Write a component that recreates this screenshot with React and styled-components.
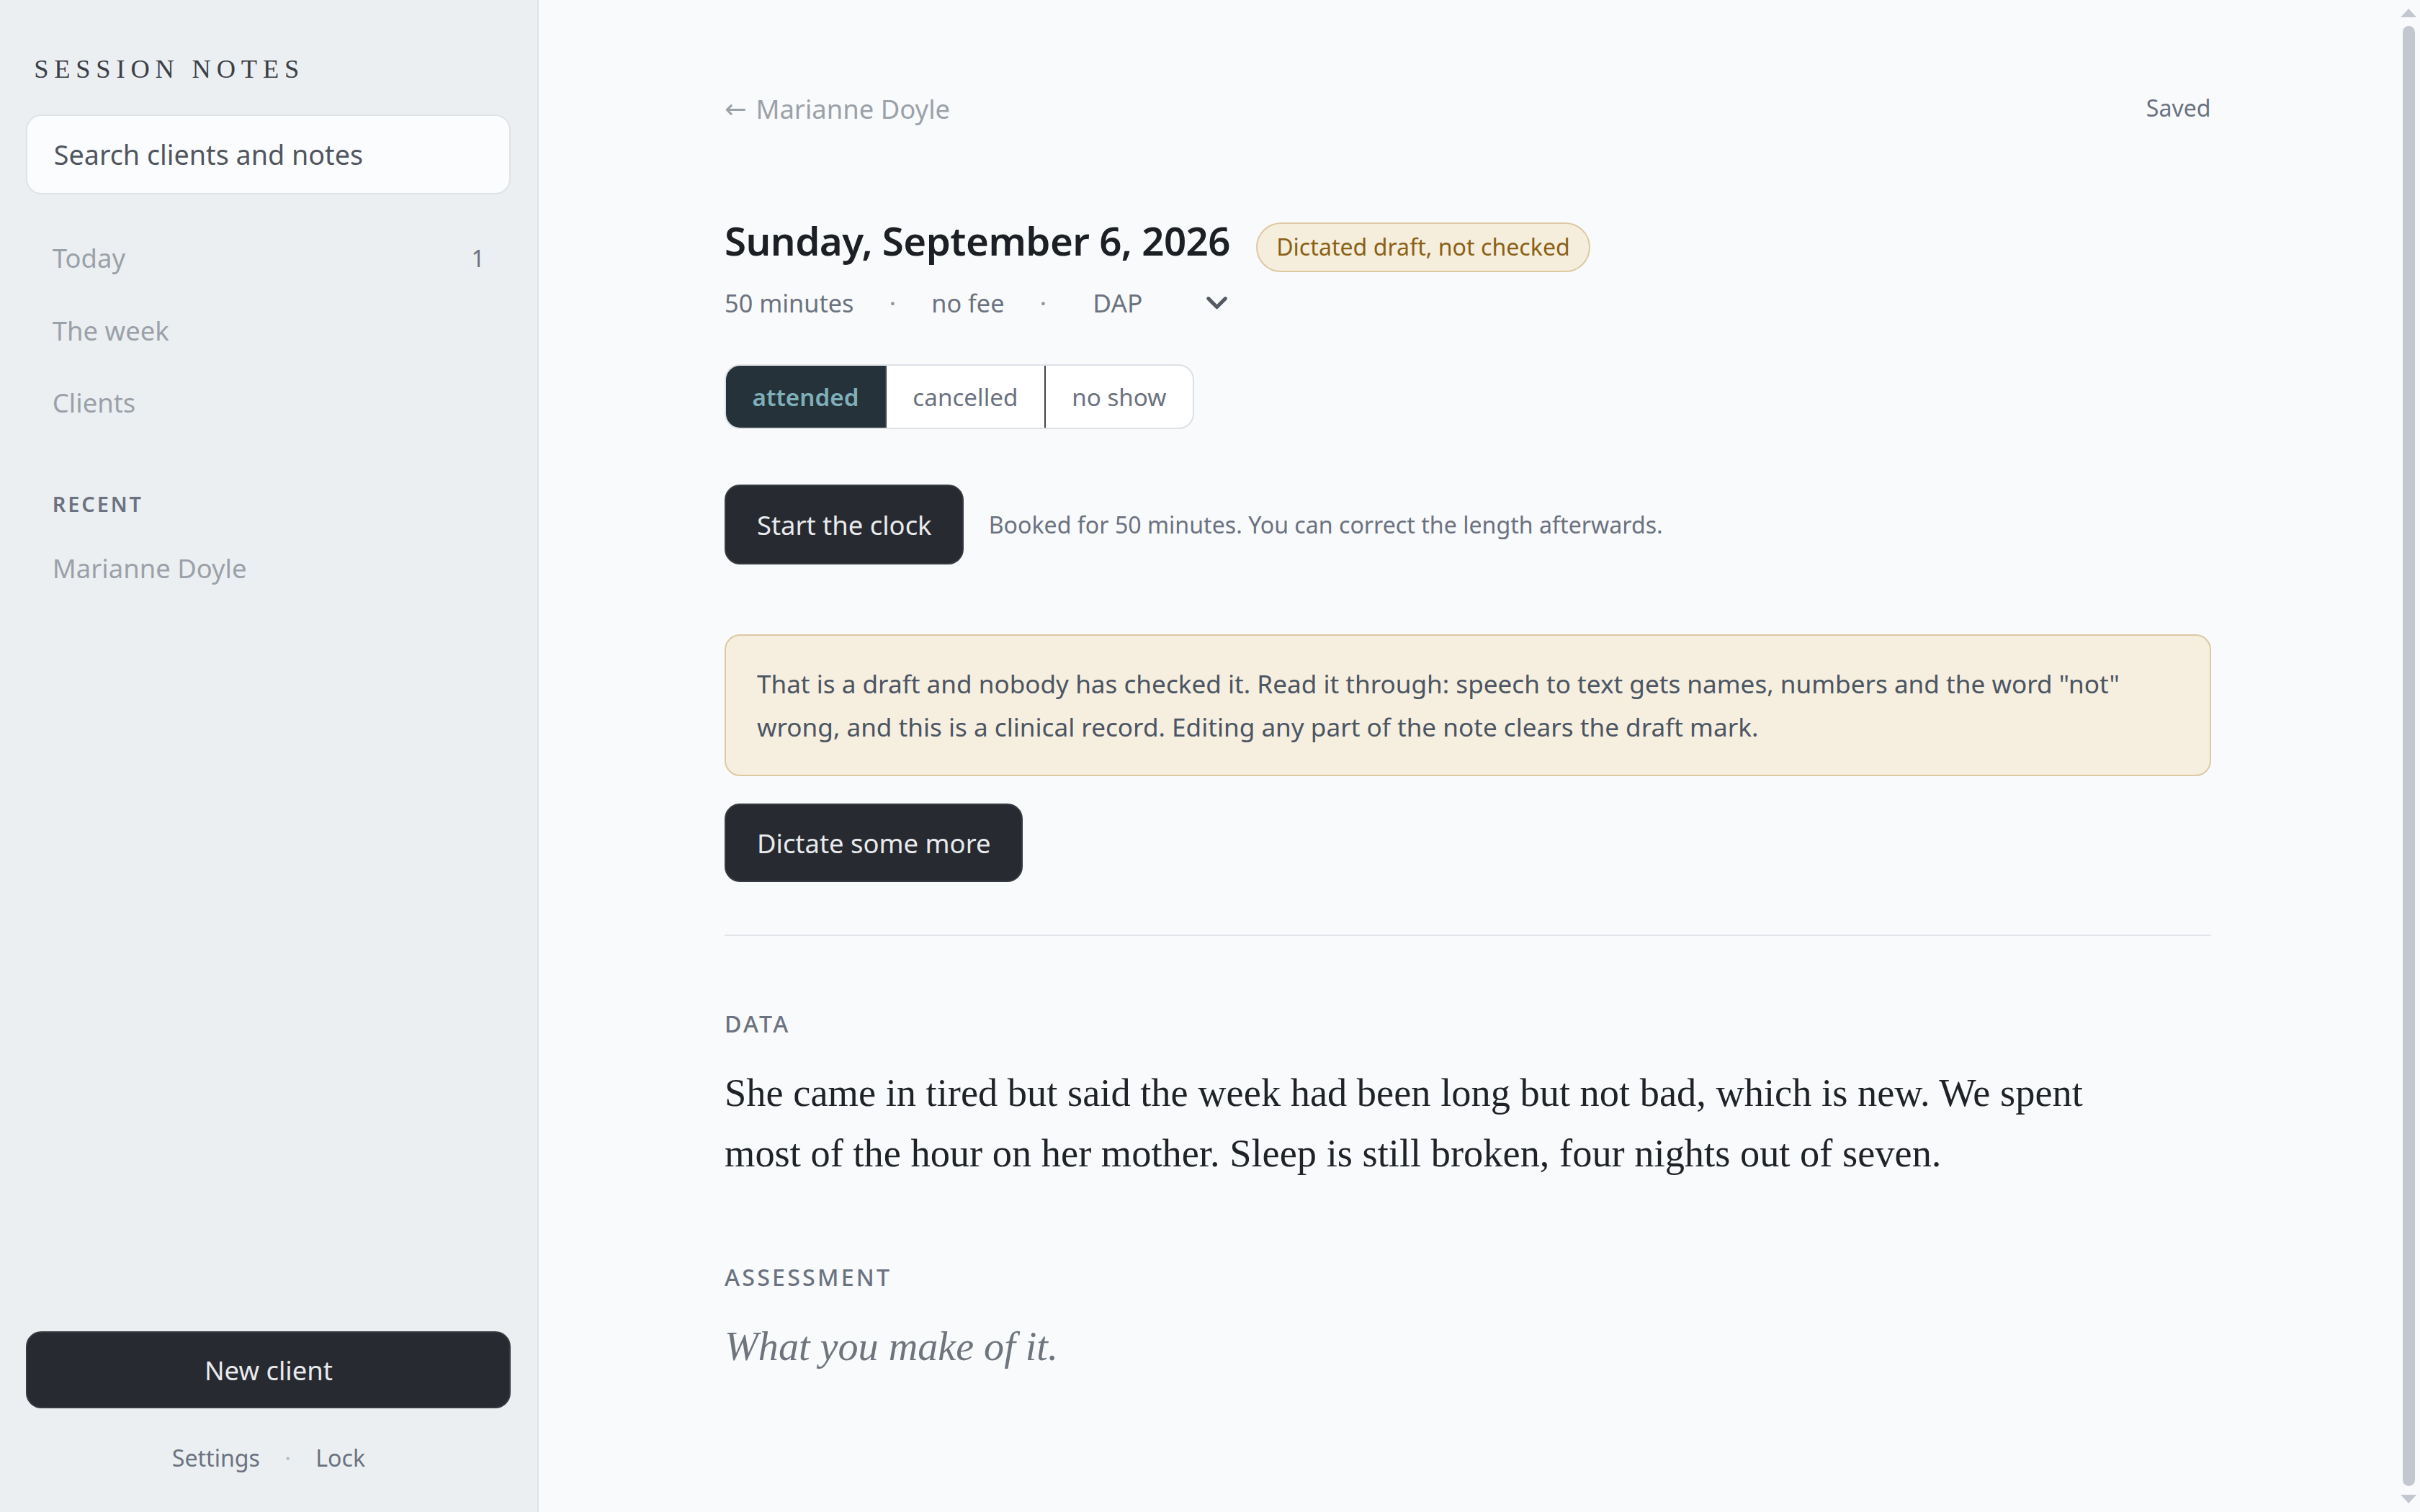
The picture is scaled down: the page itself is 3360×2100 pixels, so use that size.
import React from 'react';
import styled, { createGlobalStyle } from 'styled-components';
import { ChevronDown } from 'lucide-react';

const GlobalStyle = createGlobalStyle`
  *, *::before, *::after { box-sizing: border-box; }
  html, body { margin: 0; padding: 0; background: #f9fafc; }
`;

/* The app is laid out on a 1568px-wide design grid and scaled up as a whole. */
const Shell = styled.div`
  zoom: 2.142857;
  display: grid;
  grid-template-columns: 349px 1fr 15px;
  align-items: start;
  min-height: 980px;
  font-family: "Noto Sans", "Open Sans", sans-serif;
  color: #1f2328;
`;

/* ---------- sidebar ---------- */

const Sidebar = styled.aside`
  position: sticky;
  top: 0;
  height: 980px;
  display: flex;
  flex-direction: column;
  padding: 35px 17px 25px;
  background: #eceff2;
  border-right: 1px solid #dfe3e8;
`;

const Brand = styled.div`
  padding-left: 5px;
  font-family: "Liberation Serif", "Times New Roman", serif;
  font-size: 17px;
  line-height: 20px;
  letter-spacing: 0.215em;
  text-transform: uppercase;
  color: #3b4047;
`;

const Search = styled.input`
  margin-top: 19px;
  width: 100%;
  height: 52px;
  padding: 0 17px;
  border: 1px solid #dfe3e7;
  border-radius: 10px;
  background: #fbfcfd;
  font-family: inherit;
  font-size: 17.6px;
  color: #3d434a;
  outline: none;
  &::placeholder { color: #50565e; }
`;

const Nav = styled.nav`
  margin-top: 18px;
  display: flex;
  flex-direction: column;
`;

const NavItem = styled.a`
  display: flex;
  justify-content: space-between;
  align-items: center;
  padding: 10px 17px;
  font-size: 17px;
  line-height: 27px;
  color: #9ba1a9;
  text-decoration: none;
  cursor: pointer;
`;

const Count = styled.span`
  font-size: 15px;
  color: #6b7280;
`;

const GroupLabel = styled.div`
  margin-top: 33px;
  padding-left: 17px;
  font-size: 13.5px;
  font-weight: 600;
  line-height: 18px;
  letter-spacing: 0.1em;
  color: #6b7280;
`;

const RecentList = styled.div`
  margin-top: 9px;
  display: flex;
  flex-direction: column;
`;

const SidebarFoot = styled.div`
  margin-top: auto;
  display: flex;
  flex-direction: column;
`;

const DarkButton = styled.button`
  height: ${p => p.$h || 51}px;
  padding: 0 20px;
  border: 1px solid #363a41;
  border-radius: 10px;
  background: #272a30;
  color: #e8eaed;
  font-family: inherit;
  font-size: 17px;
  cursor: pointer;
  ${p => p.$block && 'width: 100%;'}
`;

const FootLinks = styled.div`
  margin-top: 22px;
  display: flex;
  justify-content: center;
  align-items: center;
  gap: 16px;
  font-size: 15px;
  line-height: 20px;
  color: #6b7280;
`;

const FootDot = styled.span`
  color: #b5bbc2;
`;

/* ---------- page scroll rail ---------- */

const ScrollRail = styled.div`
  position: sticky;
  top: 0;
  height: 980px;
  display: flex;
  flex-direction: column;
  align-items: center;
  padding: 5.6px 0;
  background: #f9fafc;
  color: #c3c8cf;
  svg { display: block; flex: none; }
`;

const ScrollThumb = styled.div`
  flex: 1;
  width: 8px;
  margin: 5.6px 0;
  margin-left: 0.6px;
  border-radius: 4px;
  background: #c3c8cf;
`;

const RailArrow = ({ down }) => (
  <svg width="10.4" height="5.6" viewBox="0 0 10.4 5.6">
    <path d={down ? 'M0 0H10.4L5.2 5.6Z' : 'M5.2 0L10.4 5.6H0Z'} fill="currentColor" />
  </svg>
);

/* ---------- main column ---------- */

const Main = styled.main`
  padding: 59px 0 260px;
`;

const Column = styled.div`
  max-width: 963px;
  margin: 0 auto;
  display: flex;
  flex-direction: column;
  align-items: flex-start;
`;

const TopBar = styled.div`
  align-self: stretch;
  display: flex;
  justify-content: space-between;
  align-items: flex-start;
`;

const BackLink = styled.a`
  display: inline-flex;
  align-items: center;
  gap: 6px;
  font-size: 17px;
  line-height: 24px;
  color: #9ba1a9;
  text-decoration: none;
  cursor: pointer;
`;

const BackArrow = styled.span`
  font-family: "DejaVu Sans", sans-serif;
  font-size: 17px;
  line-height: 24px;
`;

const Status = styled.span`
  margin-top: 1px;
  font-size: 15px;
  line-height: 20px;
  color: #6b7280;
`;

const TitleRow = styled.div`
  margin-top: 57px;
  display: flex;
  align-items: baseline;
  gap: 17px;
`;

const Title = styled.h1`
  margin: 0;
  font-size: 25.5px;
  font-weight: 600;
  line-height: 32px;
  letter-spacing: -0.01em;
  color: #1c1f24;
`;

const Badge = styled.span`
  height: 32px;
  padding: 0 12px;
  border: 1px solid #dcc9a1;
  border-radius: 999px;
  background: #f6eedc;
  color: #8a6116;
  font-size: 15px;
  line-height: 30px;
`;

const MetaRow = styled.div`
  margin-top: 8px;
  height: 24px;
  display: flex;
  align-items: center;
  gap: 23px;
  font-size: 16px;
  line-height: 24px;
  color: #6b7280;
`;

const MetaDot = styled.span`
  color: #8c939b;
`;

const FormatPicker = styled.button`
  display: inline-flex;
  align-items: center;
  gap: 37px;
  height: 24px;
  padding: 0 0 0 7px;
  border: 0;
  background: none;
  font-family: inherit;
  font-size: 16.5px;
  line-height: 24px;
  color: #6b7280;
  cursor: pointer;
  svg { display: block; color: #555b63; }
`;

const Segmented = styled.div`
  margin-top: 28px;
  display: flex;
  border: 1px solid #dde1e6;
  border-radius: 10px;
  overflow: hidden;
  background: #ffffff;
`;

const SegButton = styled.button`
  height: 40px;
  padding: 0 17px;
  border: 0;
  border-left: 1px solid #41464d;
  &:first-child { border-left: 0; }
  background: ${p => (p.$active ? '#26323a' : 'transparent')};
  color: ${p => (p.$active ? '#7fb0ba' : '#6b7280')};
  font-family: inherit;
  font-size: 15.5px;
  font-weight: ${p => (p.$active ? 600 : 400)};
  cursor: pointer;
`;

const ClockRow = styled.div`
  margin-top: 36px;
  display: flex;
  align-items: center;
  gap: 16px;
`;

const Hint = styled.span`
  font-size: 15px;
  color: #6b7280;
`;

const Callout = styled.div`
  margin-top: 45px;
  align-self: stretch;
  padding: 17px 20px;
  border: 1px solid #dcc9a3;
  border-radius: 10px;
  background: #f6efdf;
  font-size: 16.4px;
  line-height: 28px;
  color: #4b5563;
`;

const MoreRow = styled.div`
  margin-top: 18px;
`;

const Divider = styled.hr`
  margin: 34px 0 0;
  align-self: stretch;
  height: 1px;
  border: 0;
  background: #e1e4e8;
`;

const NoteSection = styled.section`
  margin-top: ${p => p.$gap}px;
  display: flex;
  flex-direction: column;
`;

const NoteLabel = styled.h2`
  margin: 0;
  font-size: 15px;
  font-weight: 500;
  line-height: 20px;
  letter-spacing: 0.1em;
  color: #6b7280;
`;

const NoteText = styled.p`
  margin: 15.5px 0 0;
  max-width: 905px;
  font-family: "Liberation Serif", "Times New Roman", serif;
  font-size: ${p => (p.$empty ? 26.2 : 25.4)}px;
  line-height: 39px;
  color: ${p => (p.$empty ? '#6f757d' : '#1f2328')};
  font-style: ${p => (p.$empty ? 'italic' : 'normal')};
`;

const notes = [
  {
    label: 'DATA',
    gap: 47,
    text: 'She came in tired but said the week had been long but not bad, which is new. We spent most of the hour on her mother. Sleep is still broken, four nights out of seven.',
  },
  { label: 'ASSESSMENT', gap: 50.5, placeholder: 'What you make of it.' },
];

export default function App() {
  return (
    <>
      <GlobalStyle />
      <Shell>
        <Sidebar>
          <Brand>Session notes</Brand>
          <Search placeholder="Search clients and notes" />
          <Nav>
            <NavItem>
              Today <Count>1</Count>
            </NavItem>
            <NavItem>The week</NavItem>
            <NavItem>Clients</NavItem>
          </Nav>
          <GroupLabel>RECENT</GroupLabel>
          <RecentList>
            <NavItem>Marianne Doyle</NavItem>
          </RecentList>
          <SidebarFoot>
            <DarkButton $block $h={50}>New client</DarkButton>
            <FootLinks>
              <span>Settings</span>
              <FootDot>·</FootDot>
              <span>Lock</span>
            </FootLinks>
          </SidebarFoot>
        </Sidebar>

        <Main>
          <Column>
            <TopBar>
              <BackLink>
                <BackArrow>←</BackArrow>
                Marianne Doyle
              </BackLink>
              <Status>Saved</Status>
            </TopBar>

            <TitleRow>
              <Title>Sunday, September 6, 2026</Title>
              <Badge>Dictated draft, not checked</Badge>
            </TitleRow>

            <MetaRow>
              <span>50 minutes</span>
              <MetaDot>·</MetaDot>
              <span>no fee</span>
              <MetaDot>·</MetaDot>
              <FormatPicker>
                DAP
                <ChevronDown size={22} strokeWidth={2.6} />
              </FormatPicker>
            </MetaRow>

            <Segmented>
              <SegButton $active>attended</SegButton>
              <SegButton>cancelled</SegButton>
              <SegButton>no show</SegButton>
            </Segmented>

            <ClockRow>
              <DarkButton $h={52}>Start the clock</DarkButton>
              <Hint>Booked for 50 minutes. You can correct the length afterwards.</Hint>
            </ClockRow>

            <Callout>
              That is a draft and nobody has checked it. Read it through: speech to text gets
              names, numbers and the word "not" wrong, and this is a clinical record. Editing any
              part of the note clears the draft mark.
            </Callout>

            <MoreRow>
              <DarkButton>Dictate some more</DarkButton>
            </MoreRow>

            <Divider />

            {notes.map(n => (
              <NoteSection key={n.label} $gap={n.gap}>
                <NoteLabel>{n.label}</NoteLabel>
                <NoteText $empty={!n.text}>{n.text || n.placeholder}</NoteText>
              </NoteSection>
            ))}
          </Column>
        </Main>

        <ScrollRail aria-hidden="true">
          <RailArrow />
          <ScrollThumb />
          <RailArrow down />
        </ScrollRail>
      </Shell>
    </>
  );
}
